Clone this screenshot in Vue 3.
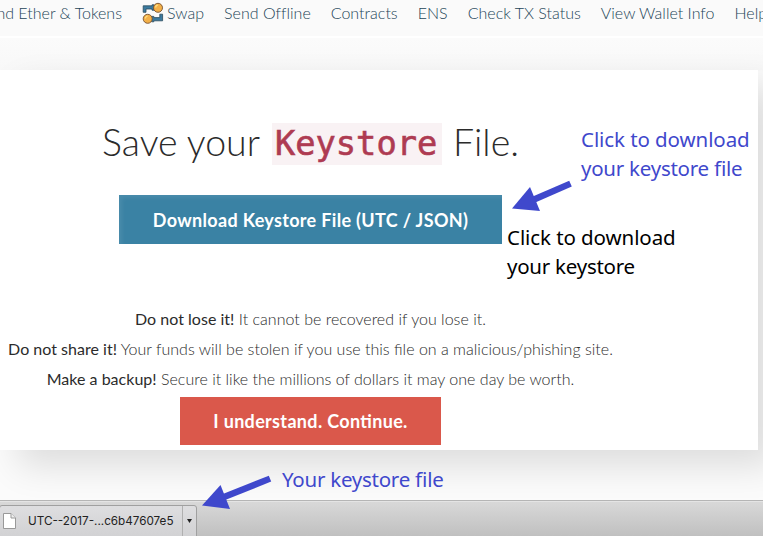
<script setup>
const links = ['Send Offline', 'Contracts', 'ENS', 'Check TX Status', 'View Wallet Info', 'Help']
const warnings = [
  { strong: 'Do not lose it!', text: 'It cannot be recovered if you lose it.' },
  { strong: 'Do not share it!', text: 'Your funds will be stolen if you use this file on a malicious/phishing site.' },
  { strong: 'Make a backup!', text: 'Secure it like the millions of dollars it may one day be worth.' },
]
</script>

<template>
  <div class="page">
    <nav class="nav">
      <a class="first"><span>nd Ether &amp; Tokens</span></a>
      <a class="swap">
        <svg width="22" height="23" viewBox="0 0 22 23">
          <path d="M1.2 10.3V3.8H10V2.8H12.2V8.2H10V7H4V10.3Z" fill="#3b7ba0" stroke="#2b4a5c" stroke-width=".8" />
          <path d="M20.6 12.2V18.8H11.8V19.8H9.6V14.4H11.8V15.6H17.8V12.2Z" fill="#3b7ba0" stroke="#2b4a5c" stroke-width=".8" />
          <circle cx="16" cy="5.8" r="4.5" fill="#f3b048" stroke="#76502f" stroke-width=".9" />
          <circle cx="5.7" cy="16.8" r="4.5" fill="#f3b048" stroke="#76502f" stroke-width=".9" />
          <path d="M13.7 5.4a2.2 2.2 0 0 1 2.2-2.2M3.4 16.4a2.2 2.2 0 0 1 2.2-2.2" fill="none" stroke="#ffdf80" stroke-width="1.3" />
        </svg>
        <span>Swap</span>
      </a>
      <a v-for="n in links" :key="n">{{ n }}</a>
    </nav>
    <main class="main">
      <section class="card">
        <div class="content">
          <h1><span>Save your</span><code>Keystore</code><span>File.</span></h1>
          <button class="btn download">Download Keystore File (UTC / JSON)</button>
          <div class="warnings">
            <p v-for="w in warnings" :key="w.strong"><strong>{{ w.strong }}</strong> {{ w.text }}</p>
          </div>
          <button class="btn continue">I understand. Continue.</button>
        </div>
      </section>
    </main>
    <footer class="shelf">
      <div class="item">
        <svg class="doc" width="13" height="16" viewBox="0 0 13 16">
          <path d="M.5.5H8L12.5 5V15.5H.5Z" fill="#fff" stroke="#999" />
          <path d="M8 .5V5H12.5" fill="#eee" stroke="#999" />
        </svg>
        <span class="name">UTC--2017-...c6b47607e5</span>
        <span class="drop"><svg width="5" height="4" viewBox="0 0 5 4"><path d="M0 0H5L2.5 4Z" fill="#222" /></svg></span>
      </div>
    </footer>

    <div class="note blue n1">Click to download<br /><span class="tight">your keystore file</span></div>
    <div class="note n2">Click to download<br /><span class="tight">your keystore</span></div>
    <div class="note blue n3"><span class="tight">Your keystore file</span></div>
    <svg class="arrow a1" width="60" height="32" viewBox="0 0 60 32">
      <path d="M58.5 3.6L22 19.5" stroke="#3f48cc" stroke-width="6.4" fill="none" />
      <path d="M0 28.5L18 7L28 31Z" fill="#3f48cc" />
    </svg>
    <svg class="arrow a2" width="70" height="34" viewBox="0 0 70 34">
      <path d="M68 3.6L22 22" stroke="#3f48cc" stroke-width="6.4" fill="none" />
      <path d="M0 30.5L18.5 10L28 34Z" fill="#3f48cc" />
    </svg>
  </div>
</template>

<style>
body { margin: 0; overflow: hidden; }
</style>
<style scoped>
.page { position: relative; width: 763px; height: 536px; overflow: hidden; display: flex; flex-direction: column; background: #fbfbfb; font-family: Lato, sans-serif; }
.nav { box-sizing: border-box; flex: none; height: 38px; border-bottom: 2px solid #fff; background: #fafafa; display: flex; gap: 20px; color: #244558; font-size: 16px; font-weight: 300; line-height: 26px; letter-spacing: .012px; white-space: nowrap; }
.nav a { flex: none; }
.first { width: 122px; display: flex; justify-content: flex-end; }
.swap { display: flex; gap: 3px; }
.swap svg { margin-top: 2px; }
.main { flex: none; height: 462px; box-sizing: border-box; padding-top: 32px; overflow: hidden; background: linear-gradient(#fbfbfb, #f8f8f8 32px, #fbfbfb 33px); }
.card { width: 758px; height: 380px; background: #fff; box-shadow: 18px 16px 34px rgba(0, 0, 0, .12); }
.content { width: 621px; height: 380px; display: flex; flex-direction: column; align-items: center; }
h1 { margin: 53px 0 0; height: 42px; display: flex; align-items: center; font-size: 37.5px; font-weight: 300; color: #2b2b2b; line-height: 42px; white-space: nowrap; }
h1 span { margin-top: -5px; }
code { margin: 0 11px 0 12px; box-sizing: border-box; width: 170px; height: 42px; padding-left: 3px; background: #f9f2f4; color: #ae3b52; font: 500 33.7px/42px "DejaVu Sans Mono", monospace; -webkit-text-stroke: .6px #ae3b52; }
.btn { border: 0; padding: 0; color: #fff; font: 700 18px/49px Lato, sans-serif; letter-spacing: .33px; font-feature-settings: "liga" 1; white-space: nowrap; }
.download { margin-top: 30px; width: 383px; height: 49px; padding-top: 1px; background: #3a82a4; box-shadow: inset 3px 3px 4px rgba(255, 255, 255, .08); }
.continue { width: 261px; height: 48px; background: #da584b; }
.warnings { margin-top: 60px; height: 93px; }
.warnings p { margin: 0; text-align: center; font-size: 16px; line-height: 30px; font-weight: 300; color: #2b2b2b; white-space: nowrap; letter-spacing: .015px; font-feature-settings: "liga" 1; }
strong { font-weight: 400; }
.shelf { box-sizing: border-box; height: 36px; border-top: 1px solid #b5b5b5; background: linear-gradient(#d9d9d9, #c0c0c0); box-shadow: inset 0 1px #e4e4e4; padding-top: 4px; }
.item { box-sizing: border-box; width: 198px; height: 36px; margin-left: -1px; border: 1px solid #a0a0a0; border-radius: 3px; background: linear-gradient(#dedee0, #d0d0d2); display: flex; }
.doc { margin: 7px 0 0 3px; }
.name { margin-left: 12px; width: 154px; font: 11.7px/30px Inter, sans-serif; color: #222; white-space: nowrap; }
.drop { border-left: 1px solid #b0b0b0; padding: 11px 0 0 4px; line-height: 0; }
.note { position: absolute; font: 20.5px/29px "Noto Sans", sans-serif; letter-spacing: -.08px; color: #000; white-space: nowrap; font-feature-settings: "liga" 1; }
.tight { letter-spacing: -.25px; }
.blue { color: #3f48cc; }
.n1 { left: 581px; top: 125px; }
.n2 { left: 507px; top: 223px; }
.n3 { left: 282px; top: 465px; }
.arrow { position: absolute; }
.a1 { left: 512px; top: 180px; }
.a2 { left: 202px; top: 475px; }
</style>
